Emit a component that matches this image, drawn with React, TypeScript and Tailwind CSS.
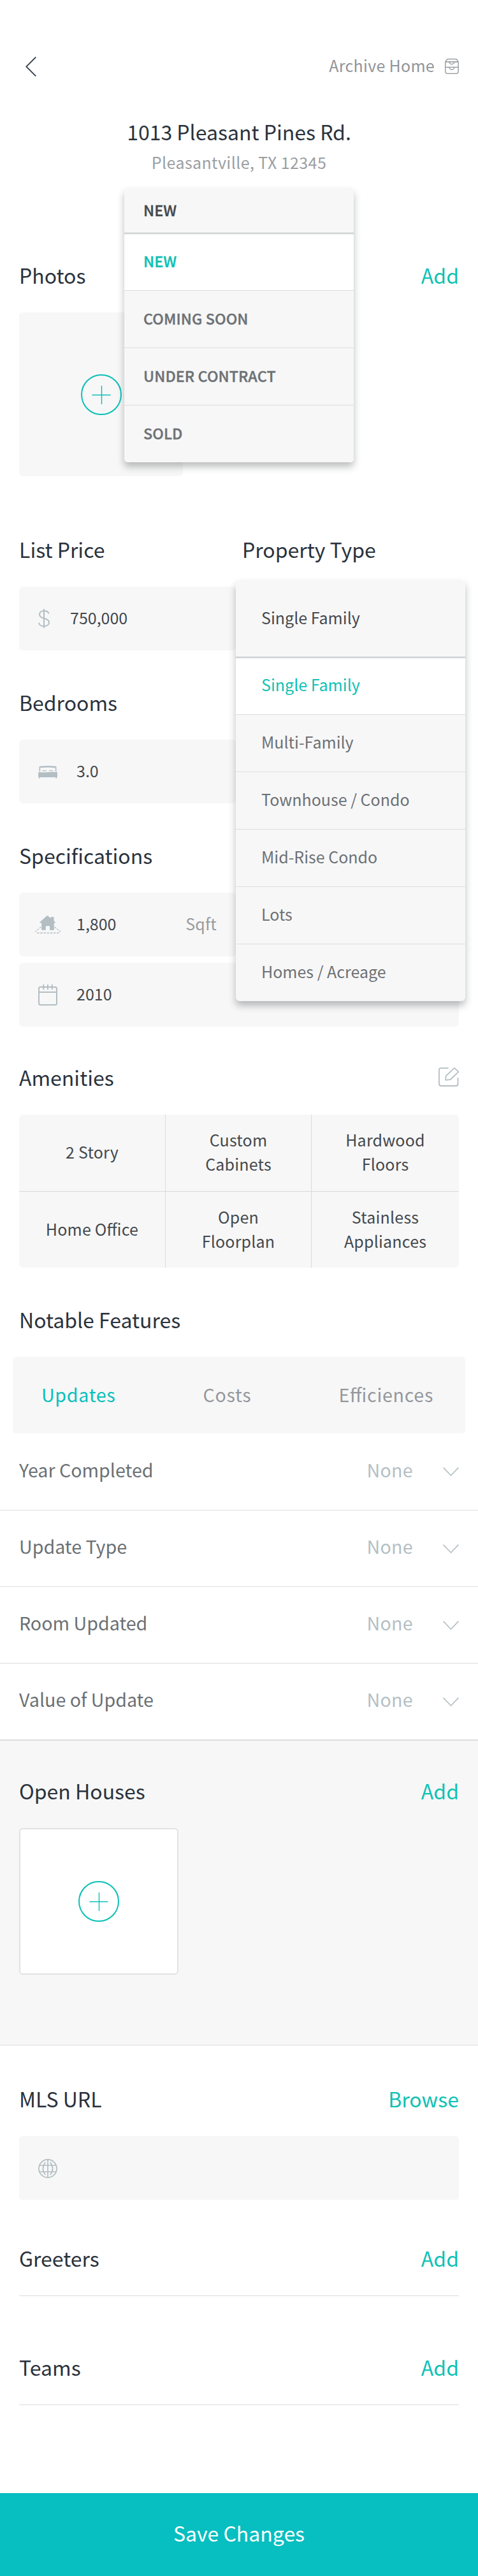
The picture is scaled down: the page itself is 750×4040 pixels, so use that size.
import type { ReactNode } from "react";

const FEATURE_ROWS = ["Year Completed", "Update Type", "Room Updated", "Value of Update"];
const AMENITIES = [
  ["2 Story"],
  ["Custom", "Cabinets"],
  ["Hardwood", "Floors"],
  ["Home Office"],
  ["Open", "Floorplan"],
  ["Stainless", "Appliances"],
];

function BackIcon() {
  return (
    <svg width="17" height="31" viewBox="0 0 17 31" fill="none" stroke="#36414d" strokeWidth="1.8">
      <path d="M16.2 0.5 1.2 15.5 16.2 30.5" />
    </svg>
  );
}

function ArchiveIcon() {
  return (
    <svg width="22" height="24" viewBox="0 0 22 24" fill="none" stroke="#8e9297" strokeWidth="1.3">
      <path d="M0.8 5 3 1.6Q3.6 .7 4.8 .7H17Q18.2 .7 18.8 1.6L21.1 5V20.3a3 3 0 0 1-3 3H3.8a3 3 0 0 1-3-3Z" />
      <path d="M0.8 5H21.1M0.8 13.3H21.1" />
      <path d="M7 5a3.9 3.6 0 0 0 7.8 0M7 13.6a3.9 3.6 0 0 0 7.8 0" />
    </svg>
  );
}

function PlusCircle() {
  return (
    <svg width="64" height="64" viewBox="0 0 64 64" fill="none" stroke="#0abfb8">
      <circle cx="32" cy="32" r="31" strokeWidth="2" />
      <path d="M17.5 32.5h29M32.5 18v29" strokeWidth="1.4" />
    </svg>
  );
}

function DollarIcon() {
  return (
    <svg width="18" height="30" viewBox="0 0 18 30" fill="none" stroke="#b3bec3" strokeWidth="2">
      <path d="M9 0v30M16.6 7.4C15.8 4.4 13 3 9 3 5 3 2 5.2 2 8.7 2 12.7 5.5 13.9 9 14.7 13 15.7 17 17 17 21.3 17 25 13.5 27 9 27 4.5 27 1.3 25 1 21.5" />
    </svg>
  );
}

function BedIcon() {
  return (
    <svg width="30" height="20" viewBox="0 0 30 20" fill="#b3bec3">
      <path d="M1.5 9V1.8Q1.5 1 2.4.8 15-.8 27.6.8q.9.2.9 1V9h-1.7V3.2Q15 1.7 3.2 3.2V9Z" />
      <path d="M6 8.6Q6.4 7 8 7h3.5q1.5 0 2 1.5Q9.5 8 6 8.6ZM16.3 8.5Q16.8 7 18.3 7h3.5q1.6 0 2 1.6Q20 8 16.3 8.5Z" />
      <path d="M0 10.8Q0 9.8 1 9.9 8 10.6 15 10 22 9.400 29 9.800q1 0 1 1V17.200q0 .8-.8.8H28.800v2H27.400V18H2.600v2H1.200V18H.8q-.8 0-.8-.8Z" />
    </svg>
  );
}

function HouseIcon() {
  return (
    <svg width="40" height="28" viewBox="0 0 40 28" fill="none">
      <path
        d="M18.3.5Q19.3-.4 20.3.5L24.6 4.3V3q0-1 1-1h3q1 0 1 1v5.300l2.200 2q.7 1.200-.8 1.200H29.800V22.800h-6.700V17.500q0-1.200-1.200-1.200H18q-1.200 0-1.200 1.200v5.300H10.200V11.500H8.200Q6.700 11 7.900 9.800Z"
        fill="#b3bec3"
      />
      <path d="M9.300 17.800.3 25.300M30.800 17.800 39.800 25.300" stroke="#b3bec3" strokeWidth="1.3" strokeDasharray="3 1.5" />
      <path d="M3 27.200H38.500" stroke="#b3bec3" strokeWidth="1.4" strokeDasharray="3.6 1.6" />
    </svg>
  );
}

function CalendarIcon() {
  return (
    <svg width="30" height="33" viewBox="0 0 30 33" fill="none" stroke="#b3bec3" strokeWidth="2">
      <rect x="1" y="4" width="28" height="28" rx="2.5" />
      <path d="M1 12h28M8.3 0v8M15 0v8M21.7 0v8" />
    </svg>
  );
}

function EditIcon() {
  return (
    <svg width="32" height="30" viewBox="0 0 32 30" fill="none" stroke="#b3bec3" strokeWidth="1.8" strokeLinejoin="round">
      <path d="M15.6 1.2H4a3 3 0 0 0-3 3V26a3 3 0 0 0 3 3H27.5a3 3 0 0 0 3-3V16.2" />
      <path d="M11.2 18.9 11.8 13.8Q11.9 13.1 12.4 12.6L24.3 1.6Q25 1 25.7 1.6L30.8 6.4Q31.4 7 30.8 7.7L19.3 18.5Q18.7 19.1 18 19.2L12 19.8Q11.1 19.8 11.2 18.9Z" />
    </svg>
  );
}

function GlobeIcon() {
  return (
    <svg width="30" height="30" viewBox="0 0 30 30" fill="none" stroke="#b3bec3" strokeWidth="1.7">
      <circle cx="15" cy="15" r="14.1" />
      <path d="M15 1v28M2 10h26M2 20h26M11.2 5.2Q3.6 15 11.2 24.8M18.8 5.2Q26.4 15 18.8 24.8" />
    </svg>
  );
}

function Chevron() {
  return (
    <svg width="25" height="14" viewBox="0 0 25 14" fill="none" stroke="#b3bec3" strokeWidth="1.6">
      <path d="M.6.6 12.5 13 24.4.6" />
    </svg>
  );
}

function Heading({ children, action }: { children: ReactNode; action?: ReactNode }) {
  return (
    <div className="flex h-10 items-center justify-between text-[32px] leading-10">
      <h2 className="text-[#2a323c]">{children}</h2>
      {action && <div className="text-[#0fc1b5]">{action}</div>}
    </div>
  );
}

function Field({ icon, value, unit }: { icon: ReactNode; value?: string; unit?: string }) {
  return (
    <div className="flex h-[100px] items-center rounded-md bg-[#f7f7f7] px-[30px] text-[25px] leading-[30px] text-[#43484d] [font-feature-settings:'liga']">
      {icon}
      <span className="grow pb-1">{value}</span>
      {unit && <span className="pb-1 tracking-[0.2px] text-[#969a9e]">{unit}</span>}
    </div>
  );
}

function StatusMenu() {
  return (
    <div className="absolute top-[109px] left-[195px] z-10 w-[360px] rounded-[5px] bg-[#f7f7f7] text-[23.3px] leading-7 font-medium tracking-[0.1px] text-[#6d7175] shadow-[0_7px_12px_rgba(30,35,40,0.3)] [-webkit-text-stroke:0.4px_currentColor]">
      <div className="flex h-[70px] items-center px-[30px] pb-[3px] text-[#45494e]">NEW</div>
      <div className="flex h-[90px] items-center border-t border-[#b4bbbb] bg-white px-[30px] pb-[3px] text-[#0fc1b5] shadow-[inset_0_2px_0_#e8eaea]">
        NEW
      </div>
      {["COMING SOON", "UNDER CONTRACT", "SOLD"].map((label) => (
        <div key={label} className="flex h-[90px] items-center border-t border-[#dbdddd] px-[30px] pb-[3px]">
          {label}
        </div>
      ))}
    </div>
  );
}

function PropertyMenu() {
  return (
    <div className="absolute top-[69px] -left-[10px] z-10 w-[360px] rounded-md bg-[#f7f7f7] text-[25px] leading-[30px] text-[#6d7175] shadow-[0_7px_12px_rgba(30,35,40,0.3)]">
      <div className="flex h-[120px] items-center px-10 pb-1 text-[#45494e]">Single Family</div>
      <div className="flex h-[90px] items-center border-t border-[#b0b8bf] bg-white px-10 pb-[5px] text-[#0fc1b5] shadow-[inset_0_2px_0_#e8eaec]">
        Single Family
      </div>
      {["Multi-Family", "Townhouse / Condo", "Mid-Rise Condo", "Lots", "Homes / Acreage"].map((label) => (
        <div key={label} className="flex h-[90px] items-center border-t border-[#dddedf] px-10 pb-[5px]">
          {label}
        </div>
      ))}
    </div>
  );
}

export default function App() {
  return (
    <div className="flex h-[4040px] w-[750px] flex-col bg-white font-['Noto_Sans_CJK_SC','Noto_Sans',sans-serif] text-[#43484d]">
      <header className="mt-[84px] flex h-10 items-center justify-between pr-[30px] pl-10">
        <BackIcon />
        <div className="flex items-center gap-4">
          <span className="pb-1 text-[25px] leading-[30px] tracking-[0.3px] text-[#919499]">Archive Home</span>
          <ArchiveIcon />
        </div>
      </header>

      <div className="relative mt-[62px] text-center">
        <h1 className="text-[32px] leading-10 text-[#2a323c]">1013 Pleasant Pines Rd.</h1>
        <p className="mt-[13px] text-[25px] leading-[30px] tracking-[0.4px] text-[#9b9ea2]">Pleasantville, TX 12345</p>
        <StatusMenu />
      </div>

      <section className="mt-[142px] px-[30px]">
        <Heading action="Add">Photos</Heading>
        <div className="mt-[39px] flex h-[257px] w-[257px] items-center justify-center rounded-md bg-[#f7f7f7]">
          <PlusCircle />
        </div>
      </section>

      <div className="mt-[94px] grid grid-cols-2 gap-x-[10px] px-[30px]">
        <div>
          <Heading>List Price</Heading>
          <div className="mt-[39px]">
            <Field icon={<div className="w-[50px] shrink-0"><DollarIcon /></div>} value="750,000" />
          </div>
          <div className="mt-[61px]">
            <Heading>Bedrooms</Heading>
          </div>
          <div className="mt-[39px]">
            <Field icon={<div className="w-[60px] shrink-0 pt-px"><BedIcon /></div>} value="3.0" />
          </div>
          <div className="mt-[61px]">
            <Heading>Specifications</Heading>
          </div>
          <div className="mt-[39px]">
            <Field icon={<div className="-ml-[5px] w-[65px] shrink-0"><HouseIcon /></div>} value="1,800" unit="Sqft" />
          </div>
        </div>
        <div className="relative">
          <Heading>Property Type</Heading>
          <PropertyMenu />
        </div>
      </div>
      <div className="mt-[10px] px-[30px]">
        <Field icon={<div className="w-[60px] shrink-0 pt-px"><CalendarIcon /></div>} value="2010" />
      </div>

      <section className="mt-[59px] px-[30px]">
        <div className="flex items-start justify-between">
          <Heading>Amenities</Heading>
          <div className="mt-[5px]">
            <EditIcon />
          </div>
        </div>
        <div className="mt-[39px] grid h-[240px] grid-cols-[229px_229px_1fr] grid-rows-2 overflow-hidden rounded-md bg-[#f7f7f7] text-center text-[25px] leading-[38px] tracking-[0.2px] [font-feature-settings:'liga']">
          {AMENITIES.map((lines) => (
            <div
              key={lines[0]}
              className="flex flex-col items-center justify-center border-[#d9dbdc] pb-1 [&:nth-child(n+4)]:border-t [&:not(:nth-child(3n+1))]:border-l"
            >
              {lines.map((line) => (
                <span key={line}>{line}</span>
              ))}
            </div>
          ))}
        </div>
      </section>

      <section className="mt-[61px]">
        <div className="px-[30px]">
          <Heading>Notable Features</Heading>
        </div>
        <div className="mx-5 mt-[39px] flex h-[120px] items-center justify-between rounded-md bg-[#f7f7f7] pr-[50px] pb-[3px] pl-[45px] text-[28.65px] leading-9 tracking-[0.7px] text-[#94979c] [font-feature-settings:'liga']">
          <span className="text-[#06c0bb]">Updates</span>
          <span>Costs</span>
          <span>Efficiences</span>
        </div>
        {FEATURE_ROWS.map((label) => (
          <div
            key={label}
            className="flex h-[120px] items-center border-[#dcdddd] px-[30px] text-[28.65px] leading-9 [&:nth-child(n+4)]:border-t"
          >
            <span className="grow pb-[7px] text-[#6b7074]">{label}</span>
            <span className="mr-[47px] pb-[7px] tracking-[0.3px] text-[#b4bfc4]">None</span>
            <Chevron />
          </div>
        ))}
      </section>

      <section className="h-[480px] border-t-2 border-b border-t-[#dcdddd] border-b-[#dcdddd] bg-[#f7f7f7] px-[30px] pt-[58px]">
        <Heading action="Add">Open Houses</Heading>
        <div className="mt-[39px] flex h-[230px] w-[250px] items-center justify-center rounded-md border-2 border-[#e2e2e2] bg-white">
          <PlusCircle />
        </div>
      </section>

      <section className="mt-[63px] px-[30px]">
        <Heading action="Browse">MLS URL</Heading>
        <div className="mt-[39px]">
          <Field icon={<div className="w-[60px] shrink-0 pt-[2px]"><GlobeIcon /></div>} />
        </div>
      </section>

      <section className="mx-[30px] mt-[71px] border-b border-[#dcdddd] pb-[39px]">
        <Heading action="Add">Greeters</Heading>
      </section>
      <section className="mx-[30px] mt-[91px] border-b border-[#dcdddd] pb-[39px]">
        <Heading action="Add">Teams</Heading>
      </section>

      <button className="mt-auto flex h-[130px] w-full items-center justify-center bg-[#07bec0] pb-[6px] text-[32px] leading-10 text-white">
        Save Changes
      </button>
    </div>
  );
}
